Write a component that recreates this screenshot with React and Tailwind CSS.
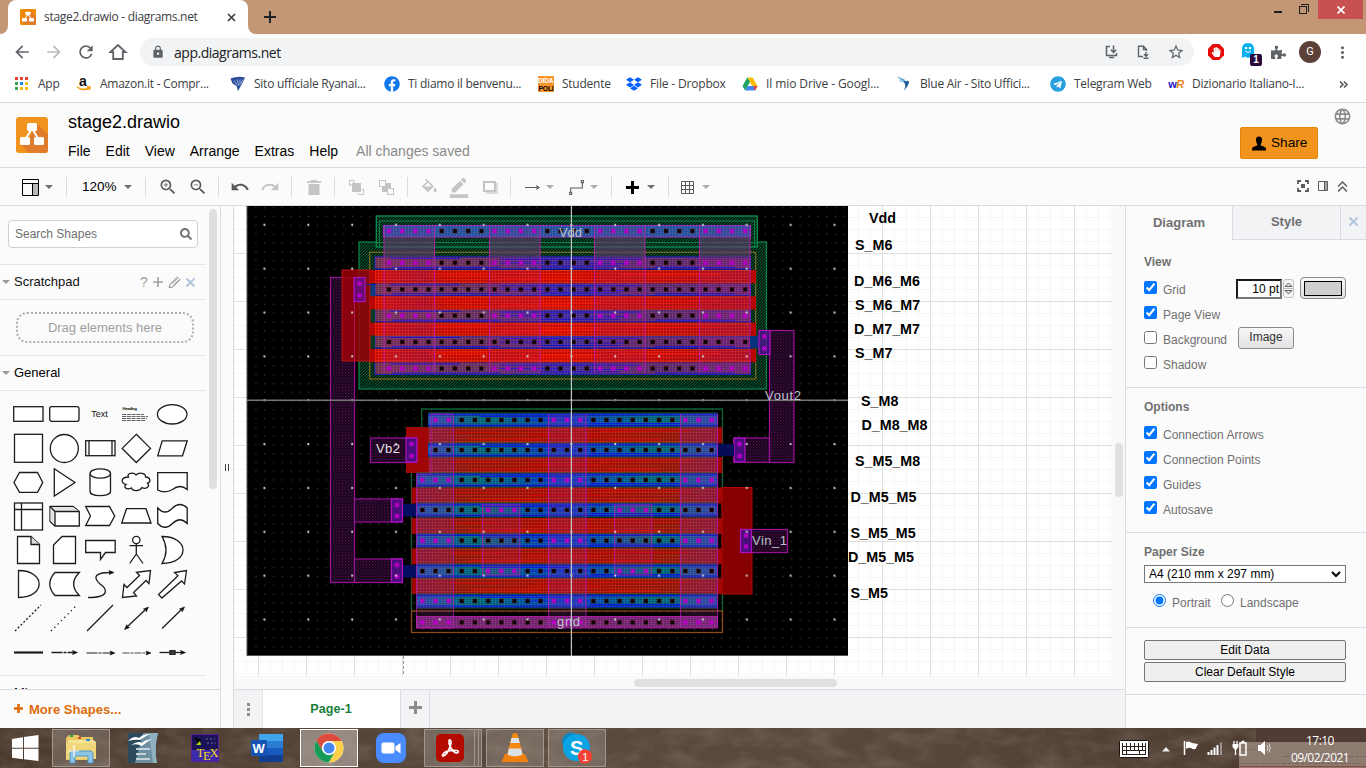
import React from "react";
import { FaFacebook, FaDropbox, FaTelegram, FaHandPaper, FaSearch, FaPuzzlePiece } from "react-icons/fa";
import {
  MdArrowBack, MdArrowForward, MdRefresh, MdLock, MdStarBorder, MdMoreVert,
  MdZoomIn, MdZoomOut, MdUndo, MdRedo, MdLanguage, MdFormatColorFill, MdBorderColor,
} from "react-icons/md";

const UI = "font-['Open_Sans','Noto_Sans',sans-serif]";

function DrawioLogo({ className, bg = "#f2931e" }) {
  return (
    <svg viewBox="0 0 32 36" preserveAspectRatio="none" className={className}>
      <rect width="32" height="36" rx="3" fill={bg} />
      <path d="M20 6 L32 17 V33 Q32 36 29 36 H13 L5 28 L14 20 Z" fill="#df7d2c" />
      <path d="M15 13 L9 23 M17 13 L23 23" stroke="#fff" strokeWidth="2" />
      <rect x="11" y="6" width="10" height="8" rx="1.5" fill="#fff" />
      <rect x="4" y="20" width="10" height="8" rx="1.5" fill="#fff" />
      <rect x="18" y="20" width="10" height="8" rx="1.5" fill="#fff" />
    </svg>
  );
}

function TabStrip() {
  return (
    <div className="flex h-[34px] w-full bg-[#c39676]">
      <div className="flex w-2 items-end bg-white">
        <div className="h-full w-full rounded-br-lg bg-[#c39676]" />
      </div>
      <div className="flex h-full w-[240px] items-center rounded-t-lg bg-white pl-3">
        <DrawioLogo className="h-4 w-4" bg="#f08705" />
        <span className={`${UI} ml-2 w-[172px] whitespace-nowrap text-[12px] tracking-[-0.3px] text-[#3c4043]`}>stage2.drawio - diagrams.net</span>
        <svg className="ml-[11px] size-[9px]" viewBox="0 0 9 9"><path d="M1 1 L8 8 M8 1 L1 8" stroke="#3c4043" strokeWidth="1.7" /></svg>
      </div>
      <div className="flex w-2 bg-white"><div className="h-full w-full rounded-bl-lg bg-[#c39676]" /></div>
      <svg className="ml-2 mt-[11px] size-3" viewBox="0 0 12 12"><path d="M6 0 V12 M0 6 H12" stroke="#202124" strokeWidth="2" /></svg>
      <div className="ml-auto flex">
        <svg className="mr-[9px] h-[19px] w-9" viewBox="0 0 36 19">
          <path d="M1 12 H9" stroke="#1d1d1d" strokeWidth="2" />
          <rect x="26.5" y="6.5" width="7" height="7" fill="none" stroke="#1d1d1d" />
          <path d="M28 4.5 H35.5 V12" fill="none" stroke="#1d1d1d" />
        </svg>
        <div className="mr-[3px] flex h-[19px] w-[45px] items-center justify-center bg-[#c75050]">
          <svg className="size-2" viewBox="0 0 8 8"><path d="M.5 .5 L7.5 7.5 M7.5 .5 L.5 7.5" stroke="#fff" strokeWidth="1.7" /></svg>
        </div>
      </div>
    </div>
  );
}

function AddressRow() {
  return (
    <div className="flex h-[36px] items-center text-[#5f6368]">
      <MdArrowBack className="ml-3 size-5" />
      <MdArrowForward className="ml-3 size-5 text-[#bababd]" />
      <MdRefresh className="ml-3 size-5" />
      <svg className="ml-3 size-5" viewBox="0 0 20 20"><path d="M2.5 10 L10 3 L17.5 10 H14.8 V17 H5.2 V10 Z" fill="none" stroke="#5f6368" strokeWidth="1.8" /></svg>
      <div className="ml-3 flex h-7 w-[1054px] items-center rounded-full bg-[#f1f3f4]">
        <MdLock className="ml-[11px] size-[14px]" />
        <span className={`${UI} ml-[9px] text-[14px] tracking-[-0.48px] text-[#202124]`}>app.diagrams.net</span>
        <svg className="ml-auto size-4" viewBox="0 0 16 16" fill="none" stroke="#5f6368" strokeWidth="1.5">
          <path d="M6 2.5 H2.5 V11.5 H12.5 V9 M5 13.500 H10 M9.5 1.500 V8 M6.8 5.8 L9.5 8.5 L12.2 5.8" />
        </svg>
        <svg className="ml-4 size-4" viewBox="0 0 16 16" fill="none" stroke="#5f6368" strokeWidth="1.4">
          <path d="M7 12.5 H2.500 V2.200 H7.500 L10.500 5.5 V7 M7.500 2.5 V5.5 H10.500 M10 8 V12 M8 10.200 L10 12.200 L12 10.200 M7.5 14.2 H12.5" />
        </svg>
        <MdStarBorder className="ml-[15px] mr-[9px] size-[18px]" />
      </div>
      <svg className="ml-[14px] size-4" viewBox="0 0 16 16"><path d="M4.7 0 H11.3 L16 4.7 V11.3 L11.3 16 H4.7 L0 11.3 V4.7 Z" fill="#e60c0c" /></svg>
      <FaHandPaper className="-ml-[13px] size-[10px] text-white" />
      <div className="relative ml-[19px] size-[20px]">
        <svg className="size-[17px]" viewBox="0 0 17 17">
          <path d="M2 16 V7 Q2 1 8 1 Q14 1 14 7 V16 L11 14.5 L8 16 L5 14.5 Z" fill="#00aef0" />
          <circle cx="6" cy="6" r="1.3" fill="#fff" /><circle cx="10" cy="6" r="1.3" fill="#fff" />
          <path d="M5 9 Q8 12 11 9" stroke="#fff" fill="none" />
        </svg>
        <span className="absolute left-[10px] top-3 flex h-3 w-3 items-center justify-center rounded-[2px] bg-[#2b0a3d] font-['Liberation_Sans',sans-serif] text-[10px] font-bold leading-none text-white">1</span>
      </div>
      <FaPuzzlePiece className="ml-[11px] size-[15px]" />
      <span className="ml-[13px] flex size-[22px] items-center justify-center rounded-full bg-[#5d4037] font-['Roboto',sans-serif] text-[11px] text-white">G</span>
      <MdMoreVert className="ml-[12px] size-[19px]" />
    </div>
  );
}

function AppsIcon() {
  const c = ["#ea4335", "#ea4335", "#ea4335", "#34a853", "#1a86f0", "#fbbc05", "#34a853", "#fbbc05", "#fbbc05"];
  return (
    <svg className="size-4" viewBox="0 0 16 16">
      {c.map((f, i) => <rect key={i} x={1 + (i % 3) * 5} y={1 + Math.floor(i / 3) * 5} width="3" height="3" fill={f} />)}
    </svg>
  );
}

function Bookmark({ w, icon, children }) {
  return (
    <div className={`flex shrink-0 items-center gap-2 whitespace-nowrap ${w}`}>
      <span className="flex size-4 shrink-0 items-center justify-center">{icon}</span>
      <span>{children}</span>
    </div>
  );
}

function Bookmarks() {
  return (
    <div className={`${UI} flex h-[28px] items-center pl-[14px] text-[12px] tracking-[-0.25px] text-[#3c4043]`}>
      <Bookmark w="w-[62px]" icon={<AppsIcon />}>App</Bookmark>
      <Bookmark w="w-[154px]" icon={
        <svg className="size-4 overflow-visible" viewBox="0 0 16 16">
          <text x="3" y="10" fontFamily="Liberation Sans, sans-serif" fontWeight="bold" fontSize="14" fill="#111">a</text>
          <path d="M1 11 Q7 15.5 13 12 M11 11 L14 11 L13.4 14" fill="none" stroke="#f90" strokeWidth="1.5" />
        </svg>}>Amazon.it - Compr...</Bookmark>
      <Bookmark w="w-[154px]" icon={
        <svg className="size-4" viewBox="0 0 16 16"><path d="M.5 2.500 Q8 -.5 15 1.500 L13 6 L8 15 L6.500 10 L2.500 7.500 Z" fill="#2b4b9b" /><path d="M4 4.500 L7 9 M7 3.500 L9 10 M10 3.500 L10 8.500 M13 3.500 L11 8" stroke="#b8c8ea" strokeWidth=".8" /></svg>}>Sito ufficiale Ryanai...</Bookmark>
      <Bookmark w="w-[154px]" icon={<FaFacebook className="size-4 text-[#1278f0]" />}>Ti diamo il benvenu...</Bookmark>
      <Bookmark w="w-[88px]" icon={
        <svg className="size-4 overflow-visible" viewBox="0 0 16 16"><rect width="16" height="16" fill="#f7952b" />
          <text x="0" y="7" textLength="15.5" lengthAdjust="spacingAndGlyphs" fontFamily="Liberation Sans, sans-serif" fontWeight="bold" fontSize="7.5" fill="#fff">DIDA</text>
          <text x="0.5" y="14.5" textLength="15" lengthAdjust="spacingAndGlyphs" fontFamily="Liberation Sans, sans-serif" fontWeight="bold" fontSize="7.5" fill="#000">POLI</text>
        </svg>}>Studente</Bookmark>
      <Bookmark w="w-[116px]" icon={<FaDropbox className="size-4 text-[#0061fe]" />}><span className="tracking-[-0.17px]">File - Dropbox</span></Bookmark>
      <Bookmark w="w-[154px]" icon={
        <svg className="size-4" viewBox="0 0 16 16">
          <path d="M5.3 1.5 H10.7 L15.5 10 H10.2 Z" fill="#fbbc04" />
          <path d="M5.3 1.5 L8 6 L3 14.5 L.5 10 Z" fill="#1ea362" />
          <path d="M5.6 10 H15.5 L13 14.5 H3 Z" fill="#4285f4" />
          <path d="M12.5 10 H15.5 L13 14.5 L11.5 12Z" fill="#ea4335" />
        </svg>}><span className="tracking-[-0.1px]">Il mio Drive - Googl...</span></Bookmark>
      <Bookmark w="w-[154px]" icon={
        <svg className="size-4" viewBox="0 0 16 16"><path d="M5 2 Q9 3.500 9.500 5.500 Q12 4 13 6 Q12.500 10 7.500 15 Q10.500 10 8.500 7 Z" fill="#1d5c9c" /><path d="M2 1 Q5 4 9 4.500 M3.500 4.500 L8 6" stroke="#6db3df" fill="none" strokeWidth="1.300" /></svg>}>Blue Air - Sito Uffici...</Bookmark>
      <Bookmark w="w-[118px]" icon={<FaTelegram className="size-4 text-[#2aa1de]" />}>Telegram Web</Bookmark>
      <Bookmark w="w-[154px]" icon={
        <span className="flex font-['Liberation_Sans',sans-serif] text-[11px] font-bold leading-none tracking-[-0.5px]"><span className="text-[#1a12c8]">w</span><span className="italic text-[#e8861c]">R</span></span>}>Dizionario Italiano-I...</Bookmark>
      <svg className="ml-[17px] h-[7px] w-[9px]" viewBox="0 0 9 7"><path d="M1 .5 L4 3.5 L1 6.5 M5 .5 L8 3.5 L5 6.5" fill="none" stroke="#4d5156" strokeWidth="1.5" /></svg>
    </div>
  );
}

function AppHeader() {
  return (
    <div className="flex h-[65px] border-b border-[#dadce0] bg-[#fbfbfb] pl-4 font-['Liberation_Sans',Arial,sans-serif]">
      <DrawioLogo className="mt-[14px] h-9 w-8" />
      <div className="ml-5 flex flex-col">
        <div className="mt-[7px] text-[18px] leading-6 text-black">stage2.drawio</div>
        <div className="mt-[7px] flex gap-[15px] text-[14px] leading-5 text-black">
          <span>File</span><span>Edit</span><span>View</span><span>Arrange</span><span>Extras</span><span>Help</span>
          <span className="ml-[3px] text-[#8a8a8a]">All changes saved</span>
        </div>
      </div>
      <div className="ml-auto mt-6 flex h-8 w-[78px] items-center rounded-[2px] border border-[#e8850c] bg-[#f2931e] pl-[11px] pt-px text-[13.6px] text-black">
        <svg className="mr-[5px] h-[15px] w-[14px]" viewBox="0 0 14 15"><path d="M7 .5 Q10.3 .5 10 4.5 Q9.7 7 8.8 8 V9.6 Q14 10.8 14 13 V14.5 H0 V13 Q0 10.8 5.2 9.6 V8 Q4.3 7 4 4.5 Q3.7 .5 7 .5Z" /></svg>
        Share
      </div>
      <MdLanguage className="ml-[15px] mr-[14px] mt-[4px] size-[19px] text-[#8c8c8c]" />
    </div>
  );
}

function Caret({ className = "text-[#707070]" }) {
  return <svg className={`h-[4px] w-[8px] shrink-0 ${className}`} viewBox="0 0 9 5" preserveAspectRatio="none"><path d="M0 0 H9 L4.5 5 Z" fill="currentColor" /></svg>;
}

function Seg({ w, children }) {
  return (
    <div className={`flex h-full shrink-0 items-center ${w}`}>
      {children}
      <div className="ml-auto h-5 w-px bg-[#dadce0]" />
    </div>
  );
}

function Toolbar() {
  return (
    <div className="flex h-[38px] items-center border-b border-[#dadce0] bg-[#fbfbfb] pt-px font-['Liberation_Sans',Arial,sans-serif]">
      <Seg w="w-[67px]">
        <svg className="ml-[22px] mr-[6px] size-[17px]" viewBox="0 0 17 17"><rect x="11" y="4" width="5" height="12" fill="#b9b9b9" /><path d="M.5 .5 H16.5 V16.5 H.5 Z M.5 4.5 H16.5 M10.5 4.5 V16" fill="none" stroke="#000" /></svg>
        <Caret />
      </Seg>
      <Seg w="w-[79px]"><span className="ml-[15px] w-[42px] pt-px text-[13.500px]">120%</span><Caret /></Seg>
      <Seg w="w-[73px]"><MdZoomIn className="ml-3 size-5 text-[#5a5a5a]" /><MdZoomOut className="ml-[10px] size-5 text-[#5a5a5a]" /></Seg>
      <Seg w="w-[73px]"><MdUndo className="ml-[11px] size-[20px] text-[#5a5a5a]" /><MdRedo className="ml-[10px] size-[20px] text-[#c4c4c4]" /></Seg>
      <Seg w="w-[43px]"><svg className="ml-[15px] h-[15px] w-[14px]" viewBox="0 0 14 15"><path d="M0 1.2 H4 V0 H10 V1.2 H14 V3 H0 Z M1.5 4 H12.5 V15 H1.5 Z" fill="#c4c4c4" /></svg></Seg>
      <Seg w="w-[73px]">
        <svg className="ml-[14px] size-[15px]" viewBox="0 0 15 15"><path d="M5 .5 H.5 V5.5 M10 14.5 H14.5 V9 M.5 .5 V5 H3 M5 .5 V3 M14.5 9.5 H12.5 M9 14.5 V12.5" fill="none" stroke="#c4c4c4" /><rect x="3" y="3" width="9" height="9" fill="#c4c4c4" /></svg>
        <svg className="ml-[15px] size-[15px]" viewBox="0 0 15 15"><path d="M3 3 H12 V12 H3Z" fill="#c4c4c4" /><rect x=".5" y=".5" width="6" height="6" fill="#fbfbfb" stroke="#c4c4c4" /><rect x="8.500" y="8.500" width="6" height="6" fill="#fbfbfb" stroke="#c4c4c4" /></svg>
      </Seg>
      <Seg w="w-[103px]">
        <MdFormatColorFill className="ml-[12px] mt-[2px] h-[20px] w-[19px] text-[#c4c4c4] [clip-path:inset(0_0_22%_0)]" />
        <MdBorderColor className="ml-[9px] size-[22px] text-[#c4c4c4]" />
        <svg className="ml-[13px] size-[15px]" viewBox="0 0 15 15"><rect x="3" y="3" width="12" height="11" fill="#dcdcdc" /><rect x="1" y="2" width="11" height="9" fill="#fbfbfb" stroke="#c4c4c4" strokeWidth="2" /></svg>
      </Seg>
      <Seg w="w-[101px]">
        <svg className="ml-[14px] h-[7px] w-[15px]" viewBox="0 0 15 7"><path d="M0 3.5 H14" stroke="#5a5a5a" /><path d="M15 3.5 L11 .8 L12 3.5 L11 6.2 Z" fill="#5a5a5a" /></svg>
        <span className="w-[6px]" /><Caret className="text-[#adadad]" />
        <svg className="ml-[14px] size-[17px]" viewBox="0 0 16 16"><path d="M2.5 12 V8.5 H13.5 V3.5" fill="none" stroke="#5a5a5a" /><rect x="1.5" y="12.5" width="2" height="2" fill="#fff" stroke="#5a5a5a" /><rect x="12.5" y="1.5" width="2" height="2" fill="#fff" stroke="#5a5a5a" /></svg>
        <span className="w-[5px]" /><Caret className="text-[#adadad]" />
      </Seg>
      <Seg w="w-[57px]">
        <svg className="ml-[14px] mr-[8px] size-[13px]" viewBox="0 0 13 13"><path d="M6.5 0 V13 M0 6.5 H13" stroke="#000" strokeWidth="3" /></svg><Caret />
      </Seg>
      <svg className="ml-3 mr-2 size-[13px]" viewBox="0 0 13 13"><path d="M.5 .5 H12.5 V12.5 H.5 Z M4.5 .5 V12.5 M8.5 .5 V12.5 M.5 4.5 H12.5 M.5 8.5 H12.5" fill="none" stroke="#5a5a5a" /></svg>
      <Caret className="text-[#adadad]" />
      <div className="ml-auto mr-[18px] flex items-center gap-[9px] pb-[2px]">
        <svg className="size-3" viewBox="0 0 12 12"><path d="M1 4 V1 H4 M8 1 H11 V4 M11 8 V11 H8 M4 11 H1 V8" fill="none" stroke="#5a5a5a" strokeWidth="1.8" /><rect x="4" y="4" width="4" height="4" fill="#5a5a5a" /></svg>
        <svg className="h-[10px] w-[10px]" viewBox="0 0 10 10"><rect x="6" y="1" width="3" height="8" fill="#a5a5a5" /><path d="M.5 .5 H9.5 V9.5 H.5Z M6.5 .5 V9.5" fill="none" stroke="#5a5a5a" /></svg>
        <svg className="h-[11px] w-[11px]" viewBox="0 0 11 11"><path d="M1 5.5 L5.5 1 L10 5.5 M1 10.5 L5.5 6 L10 10.5" fill="none" stroke="#5a5a5a" strokeWidth="1.4" /></svg>
      </div>
    </div>
  );
}

const arrow = (x, y, a) => <path d="M0 0 L-5 -2 L-4 0 L-5 2 Z" fill="#000" strokeWidth=".6" transform={`translate(${x} ${y}) rotate(${a})`} />;

const SHAPES = [
  <rect x="3.7" y="9.7" width="29.3" height="14.6" />,
  <rect x="3.7" y="9.7" width="29.3" height="14.6" rx="2" />,
  <text x="9.3" y="20" fontSize="9" textLength="16.5" stroke="none" fill="#111" fontFamily="Liberation Sans, sans-serif">Text</text>,
  <g><text x="4.5" y="13" fontSize="4.4" textLength="14.5" fontWeight="bold" stroke="none" fill="#111" fontFamily="Liberation Sans, sans-serif">Heading</text><path d="M4 17.5 H26 M4 19.5 H30 M4 21.5 H29 M4 23.5 H28" strokeWidth=".7" strokeDasharray="4 .8" /></g>,
  <ellipse cx="18.2" cy="17.3" rx="14.8" ry="9.7" />,
  <rect x="4.5" y="3.3" width="28" height="28" />,
  <circle cx="18.3" cy="17.5" r="14" />,
  <g><rect x="3.7" y="9.7" width="29.3" height="15" /><path d="M7 9.7 V24.7 M30 9.7 V24.7" /></g>,
  <path d="M18.3 3.3 L32.5 17.4 L18.3 31.5 L4.2 17.4 Z" />,
  <path d="M8.2 9.8 H33.2 L28.5 24.8 H3.7 Z" />,
  <path d="M9.5 7.5 H27.5 L32.7 17.5 L27.5 27.3 H9.5 L4 17.5 Z" />,
  <path d="M8.3 3.8 L29 17.5 L8.3 31 Z" />,
  <g><path d="M8 8.5 V26.5 C8 32 28.5 32 28.5 26.5 V8.5" /><ellipse cx="18.3" cy="8.5" rx="10.2" ry="4.7" /></g>,
  <path d="M10.5 12 C8 8 16 7 18 10 C21 7 28 8 27.5 12 C33 12.5 33 17 29.5 18 C33 22 27 24.5 24 22.5 C22 26.5 14.5 26.5 13.5 23 C8 25.5 5 21.5 8 19.5 C2 18 3 12 10.5 12 Z" />,
  <path d="M3.7 7.7 H33.2 V24.5 Q26 18.5 18.5 24.5 Q11 29 3.7 25 Z" />,
  <g><rect x="4.5" y="4" width="28" height="27" /><path d="M11.5 4 V31 M4.5 10.5 H32.5" /></g>,
  <g><path d="M4 7.5 H27 L33.3 12.5 V27 H9 L4 22.5 Z" /><path d="M4.5 8 H27 L32.5 12 H9Z M4.5 8 L8.5 12.5 V26 L4.5 22Z" fill="#e4e4e4" stroke="none" /><path d="M4 7.5 L9 12.5 H33 M9 12.5 V27" fill="none" /></g>,
  <path d="M3.7 7.5 H27.5 L32.7 17 L27.5 26.5 H3.7 L8.5 17 Z" />,
  <path d="M8.5 9.7 H28 L33 24 H3.7 Z" />,
  <path d="M3.7 9 Q11 17 18.5 9 Q26 2 33.2 9 V24.5 Q26 17 18.5 24.5 Q11 32 3.7 24.5 Z" />,
  <g><path d="M7.5 3.5 H21 L29.5 11.5 V30.5 H7.5 Z" /><path d="M21 3.5 V11.5 H29.5" fill="#ddd" /></g>,
  <path d="M16 3.5 H29.5 V30.5 H7.5 V12 Z" />,
  <path d="M3.7 7.5 H33.2 V19.5 H23.5 L18.5 26.5 V19.5 H3.7 Z" />,
  <g><circle cx="18.3" cy="7" r="3.7" /><path d="M18.3 11 V21 M11.5 12.7 H25 M18.3 21 L11.7 30.5 M18.3 21 L25 30.5" /></g>,
  <path d="M8 3.5 C36 3.5 36 30.5 8 30.5 Q16 17 8 3.5 Z" />,
  <path d="M8.5 3.5 C36 3.5 36 30.5 8.5 30.5 Z" />,
  <path d="M9 5.5 H33.3 Q22 17 33.3 28.5 H9 Q-1.5 17 9 5.5 Z" />,
  <g><path d="M6 30.5 C30 30.5 24 21 18 17 C8 8 18 5.5 28 5.5" fill="none" />{arrow(32, 5.5, 0)}</g>,
  <path d="M32.5 3.5 L31 16.5 L28 13.5 L15.5 25.5 L18.5 29 L4.5 30.5 L6 17.5 L9 20.5 L21.5 8.5 L18.5 5.3 Z" />,
  <path d="M32.5 3.5 L30.5 17 L27.5 14 L8 31 L4.5 27.5 L24 8.8 L20.5 5.5 Z" />,
  <path d="M5 30 L31 4" strokeDasharray="2 2" />,
  <path d="M5 30 L31 4" strokeDasharray="1.3 3.4" />,
  <path d="M5 30 L31 4" />,
  <g><path d="M9 26 L27 9" />{arrow(30.5, 6, -43)}{arrow(6.5, 28.5, 137)}</g>,
  <g><path d="M8 27.5 L27 9" />{arrow(30.5, 6, -43)}</g>,
  <path d="M4 17.5 H33" strokeWidth="2.2" />,
  <g><path d="M5.500 17.5 H29" strokeDasharray="11 1 3 1" />{arrow(31.5, 17.5, 0)}</g>,
  <g><path d="M4.5 18 H30" strokeDasharray="11 1 3 1" strokeWidth="1" />{arrow(33, 18, 0)}</g>,
  <g><path d="M4.5 18 H30" strokeDasharray="7 1 3 1" strokeWidth=".8" />{arrow(33, 18, 0)}</g>,
  <g><path d="M5.5 17.5 H29" /><rect x="16" y="15.7" width="5" height="3.6" fill="#444" />{arrow(31.5, 17.5, 0)}</g>,
];

function Sidebar() {
  return (
    <div className="flex h-full w-[221px] flex-col border-r border-[#dadce0] bg-[#fbfbfb] font-['Liberation_Sans',Arial,sans-serif]">
      <div className="flex h-[483px] overflow-hidden">
        <div className="w-[206px] shrink-0">
          <div className="flex h-[59px] border-b border-[#e5e5e5] pl-2 pt-[14px]">
            <div className="flex h-[28px] w-[190px] items-center rounded border border-[#d0d0d0] bg-white pl-[6px] text-[12px] text-[#707070]">
              Search Shapes<FaSearch className="ml-auto mr-[5px] size-3 text-[#707070]" />
            </div>
          </div>
          <div className="flex h-[35px] items-center border-b border-[#e5e5e5] pl-[2px] text-[13px] text-[#111]">
            <Caret className="mr-[4px] text-[#999]" />
            <span className="w-[126px]">Scratchpad</span>
            <span className="text-[14px] text-[#a3a3a3]">?</span>
            <svg className="ml-[5px] size-[10px]" viewBox="0 0 10 10"><path d="M5 0 V10 M0 5 H10" stroke="#a3a3a3" strokeWidth="1.6" /></svg>
            <svg className="ml-[5px] size-[13px]" viewBox="0 0 12 12"><path d="M1 11 L2 7.5 L8.5 1 L11 3.5 L4.5 10 Z M3.5 7 L8.5 2.5 M5 8.500 L10 4" fill="none" stroke="#8c8c8c" strokeWidth=".9" /></svg>
            <svg className="ml-[5px] size-[9px]" viewBox="0 0 9 9"><path d="M.5 .5 L8.5 8.5 M8.5 .5 L.5 8.5" stroke="#b3c6de" strokeWidth="2" /></svg>
          </div>
          <div className="flex h-[56px] border-b border-[#e5e5e5] pl-4 pt-3">
            <div className="flex h-[31px] w-[178px] items-center justify-center rounded-[11px] border-2 border-dotted border-[#b0b0b0] text-[13px] text-[#a0a0a0]">Drag elements here</div>
          </div>
          <div className="flex h-[35px] items-center border-b border-[#e5e5e5] pl-[2px] text-[13px] text-black">
            <Caret className="mr-[4px] text-[#999]" />General
          </div>
          <div className="grid h-[285px] grid-cols-[repeat(5,36px)] auto-rows-[34px] border-b border-[#e5e5e5] pl-[10px] pt-[6px]">
            {SHAPES.map((s, i) => (
              <svg key={i} className="h-[34px] w-[36px]" viewBox="0 0 36 34" fill="#fff" stroke="#1c1c1c" strokeWidth="1.3">{s}</svg>
            ))}
          </div>
          <div className="pl-[14px] pt-[9px] text-[13px] leading-[16px] text-black">Misc</div>
        </div>
        <div className="ml-[3px] mt-[3px] h-[280px] w-2 rounded-full bg-[#dfdfdf]" />
      </div>
      <div className="flex flex-1 items-center border-t border-[#dadce0] pl-[14px] pt-[2px] text-[13px] font-bold text-[#dd6b0c]">
        <svg className="mb-[3px] mr-[6px] size-[9px]" viewBox="0 0 9 9"><path d="M4.5 0 V9 M0 4.5 H9" stroke="#dd6b0c" strokeWidth="2.6" /></svg>
        <span className="tracking-[0.04px]">More Shapes...</span>
      </div>
    </div>
  );
}

/* Layout cell drawing */
const range = (n) => Array.from({ length: n }, (_, i) => i);

function Contact({ x, y, pink, r = 2 }) {
  return pink
    ? <path d={`M${x - 2.2} ${y - 2.2} L${x + 2.2} ${y + 2.2} M${x + 2.2} ${y - 2.2} L${x - 2.2} ${y + 2.2} M${x} ${y - 2.5} V${y + 2.5} M${x - 2.5} ${y} H${x + 2.5}`} stroke="#b400c4" strokeWidth="1.1" />
    : <rect x={x - r} y={y - r} width={r * 2} height={r * 2} fill="#0a0408" stroke="#501818" strokeWidth=".5" />;
}

function BoxP({ x, y, w, h }) {
  return <rect x={x} y={y} width={w} height={h} fill="url(#purple)" stroke="#9a129a" strokeWidth="1.2" />;
}

function Via({ x, y, h = 24 }) {
  return (
    <g>
      <rect x={x} y={y} width="11" height={h} fill="#5a10a0" fillOpacity=".7" stroke="#b010c0" strokeWidth="1.2" />
      <Contact x={x + 5.5} y={y + 6} pink /><Contact x={x + 5.5} y={y + h - 6} pink />
    </g>
  );
}

function ChipLayout() {
  const upRows = [262.8, 289.3, 315.7, 342, 368.5];
  const upRed = [270, 296.3, 322.7, 349];
  const lowRows = [420, 450, 480, 510, 540.7, 571, 601];
  const lowRed = [427.3, 457, 487.5, 518, 548.3, 578];
  const lowCols = [[548.5, 37.5], [680.5, 37]];
  return (
    <g>
      <rect x="247" y="206" width="601" height="450" fill="#000" />
      <rect x="247" y="206" width="601" height="450" fill="url(#dots)" />
      <path d="M247 206 V656 M247 655.5 H848" stroke="#555" fill="none" />

      <rect x="359" y="242" width="407.5" height="147" fill="url(#well)" stroke="#0c8048" strokeWidth="1.3" />
      <rect x="376.3" y="216" width="381" height="31" fill="url(#well)" stroke="#10904e" strokeWidth="1.3" />
      <path d="M379.5 247 V221 H754.5 V247 M376 242.5 H757" fill="none" stroke="#0d8048" />
      <rect x="369.7" y="252.3" width="386" height="126.7" fill="none" stroke="#7d6a1c" strokeWidth="1.2" />
      <rect x="375" y="257" width="375.5" height="117" fill="#0a0a70" />

      <BoxP x={330.5} y={277.5} w={24} h={305} />
      <rect x="342" y="270" width="28" height="91" fill="#a00008" fillOpacity=".82" stroke="#c01010" />
      <path d="M354.5 277 V361" stroke="#b01050" />

      <rect x="383.5" y="225.5" width="367" height="11.5" fill="#2c58a8" stroke="#9030c0" strokeWidth="1.1" />
      <rect x="383.5" y="225.5" width="367" height="11.5" fill="url(#speck)" />
      {upRows.map((y) => (
        <g key={y}>
          <rect x="375" y={y - 6} width="375.5" height="12" fill="url(#upbar)" stroke="#1c1cb8" />
          <path d={`M390 ${y - 4.500} H460 M500 ${y - 3.500} H640 M655 ${y + 4.500} H735 M392 ${y + 4.500} H500 M540 ${y + 3.500} H620 M500 ${y} H560 M590 ${y + 1} H625`} stroke="#1c14d8" />
          <rect x="375" y={y - 6} width="375.5" height="12" fill="url(#speck)" />
        </g>
      ))}
      {upRed.map((y) => (
        <g key={y}>
          <rect x="370" y={y} width="386" height="13.2" fill="#b80606" />
          <rect x="375" y={y} width="375" height="13.2" fill="url(#upred)" />
          <rect x="375" y={y} width="375" height="13.2" fill="url(#redspeck)" />
          <path d={`M375 ${y + .5} H750 M375 ${y + 12.7} H750`} stroke="#c8400c" strokeDasharray="1.5 1" />
          <path d={`M430 ${y + 4} H490 M540 ${y + 6.5} H600 M500 ${y + 9} H570 M620 ${y + 4.5} H720`} stroke="#f01404" />
        </g>
      ))}
      {[384, 489.5, 594.5, 699.5].map((x) => (
        <g key={x}>
          <rect x={x} y="237" width="50.5" height="20" fill="#4c4464" fillOpacity=".6" />
          <rect x={x} y="226" width="50.5" height="147" fill="#a0208c" fillOpacity=".14" />
          <path d={`M${x} 226 V373 M${x + 50.5} 226 V373`} stroke="#c020b8" strokeOpacity=".75" strokeWidth="1.1" />
        </g>
      ))}
      {[231, ...upRows].map((y, r) => range(28).map((i) => (
        <Contact key={`${y}-${i}`} x={389 + i * 13.19} y={y} pink={(i >> 2) % 2 === 0 && (r === 0 || r % 2 === 1)} />
      )))}
      <rect x="370.5" y="284" width="4.5" height="12" fill="#0c3c80" />
      <path d="M365 284.500 H376" stroke="#1020b0" />
      <rect x="371" y="309.500" width="4" height="12" fill="#063c24" /><rect x="371" y="335.5" width="4" height="12" fill="#063c24" />
      <Via x={354} y={277.5} />
      <rect x="750" y="336" width="9" height="12" fill="#08307c" />

      <BoxP x={769.5} y={330.5} w={24.5} h={132} />
      <BoxP x={734} y={438} w={35.5} h={24.3} />
      <Via x={759} y={330.5} />
      <Via x={734} y={438} />
      <BoxP x={354.5} y={499} w={48} h={23} />
      <BoxP x={354.5} y={559} w={48} h={23.5} />
      <Via x={391.5} y={499} h={23} />
      <Via x={391.5} y={559} h={23.5} />

      <path d="M411.5 611 V470.5 H421.7 V409 H722.5 V611" fill="none" stroke="#0c6236" strokeWidth="1.3" />
      <rect x="411.5" y="611" width="311" height="21.5" fill="none" stroke="#8a4c14" strokeWidth="1.3" />
      <rect x="403" y="504" width="15" height="12.5" fill="#040c60" /><rect x="403" y="565" width="15" height="12.5" fill="#040c60" />
      <rect x="717" y="444" width="17" height="12" fill="#040c58" />
      <rect x="406" y="427" width="22" height="45.5" fill="#a00404" />
      <rect x="722" y="487.5" width="30" height="106.5" fill="#860000" stroke="#b80808" />
      {lowRed.map((y, i) => (
        <g key={y}>
          <rect x={i < 2 ? 406 : 411.5} y={y} width={i < 2 ? 316.5 : 311} height="16" fill="#a00606" />
          <rect x={i < 2 ? 428 : 416.5} y={y} width={i < 2 ? 290 : 301} height="16" fill="url(#lowred)" />
          <rect x={i < 2 ? 428 : 416.5} y={y} width={i < 2 ? 290 : 301} height="16" fill="url(#redspeck)" />
          <path d={`M450 ${y + 5} H500 M530 ${y + 8} H600 M600 ${y + 4} H690 M470 ${y + 12} H540 M610 ${y + 12.5} H660`} stroke="#d00c04" />
        </g>
      ))}
      {lowRows.map((y, i) => (
        <g key={y}>
          <rect x={i < 2 ? 428 : 416.5} y={y - 6.5} width={i < 2 ? 290 : 301} height="13" fill="url(#lowbar)" />
          <path d={`M${i < 2 ? 428 : 416.5} ${y - 5.5} H717.5 M${i < 2 ? 428 : 416.5} ${y + 5.5} H717.5`} stroke="#0a20d0" strokeWidth="1.8" />
          <path d={`M${i < 2 ? 428 : 416.5} ${y - 7.2} H717.5 M${i < 2 ? 428 : 416.5} ${y + 7.2} H717.5`} stroke="#1c6a34" strokeWidth=".7" />
          <rect x={i < 2 ? 428 : 416.5} y={y - 6} width={i < 2 ? 290 : 301} height="12" fill="url(#speck)" />
          <path d={`M480 ${y - 3.500} H570 M530 ${y} H590 M590 ${y + 3.500} H680`} stroke="#0c18e0" strokeWidth=".9" />
        </g>
      ))}
      <rect x="416.5" y="616.5" width="301" height="11.5" fill="#7c2878" stroke="#b018a8" />
      <rect x="416.5" y="616.5" width="301" height="11.5" fill="url(#speck)" />
      {lowCols.map(([x, w]) => (
        <g key={x}>
          <rect x={x} y="414" width={w} height="214" fill="#90309c" fillOpacity=".2" />
          <path d={`M${x} 414 V628 M${x + w} 414 V628`} stroke="#b81cb8" strokeOpacity=".75" strokeWidth="1.1" />
        </g>
      ))}
      <path d="M431 414 H453.5 V628 H416.5 V474 H431 Z" fill="#90309c" fillOpacity=".2" stroke="#b81cb8" strokeOpacity=".7" />
      {[482.5, 614.5].map((x) => (
        <rect key={x} x={x} y="505" width="37.3" height="70" fill="#c02080" fillOpacity=".16" stroke="#b81cb8" strokeOpacity=".7" />
      ))}
      {[...lowRows, 622.3].map((y, r) => range(23).map((i) => {
        const k = i - 1;
        if (k < 0 && r < 2) return null;
        const main = k < 2 || (k >= 9 && k <= 11) || k >= 19;
        const mid = (k >= 4 && k <= 6) || (k >= 14 && k <= 16);
        const pink = r === 3 || r === 5 ? mid : r !== 1 && main;
        return <Contact key={`${y}-${i}`} x={435.5 + k * 13.15} y={y} pink={pink} />;
      }))}
      <BoxP x={370.5} y={438} w={46} h={24.5} />
      <Via x={406} y={438} />
      <BoxP x={740.5} y={529.5} w={47} h={23} />
      <Via x={740.5} y={529.5} h={23} />

      <rect x="247" y="206" width="601" height="450" fill="url(#majordots)" />
      <path d="M247 400.3 H848" stroke="#777" strokeWidth="1.6" />
      <path d="M571.4 206 V656" stroke="#c4c4c8" strokeWidth="1.2" />
      <g fill="#bcc2cc" fontFamily="Liberation Sans, sans-serif" fontSize="13">
        <text x="559" y="236.5" textLength="23">Vdd</text>
        <text x="765" y="399.5" textLength="36">Vout2</text>
        <text x="376" y="453" textLength="24" fill="#e4e4e4">Vb2</text>
        <text x="752" y="544.5" textLength="35">Vin_1</text>
        <text x="557" y="626" textLength="23">gnd</text>
      </g>
    </g>
  );
}

const LABELS = [
  ["Vdd", 869, 223], ["S_M6", 855, 250], ["D_M6_M6", 854, 286], ["S_M6_M7", 855, 310], ["D_M7_M7", 854, 334],
  ["S_M7", 855, 358], ["S_M8", 861, 406], ["D_M8_M8", 861.5, 430], ["S_M5_M8", 855, 466], ["D_M5_M5", 850.5, 502],
  ["S_M5_M5", 850.5, 538], ["D_M5_M5", 848, 562], ["S_M5", 850.5, 598],
];

function Canvas() {
  return (
    <svg className="block h-[470px] w-[878px] bg-white" viewBox="234 206 878 470">
      <defs>
        <pattern id="grid" x="258" y="253" width="48" height="48" patternUnits="userSpaceOnUse">
          <path d="M12.5 0 V48 M24.5 0 V48 M36.5 0 V48 M0 12.5 H48 M0 24.5 H48 M0 36.5 H48" stroke="#f6f6f6" />
          <path d="M.5 0 V48 M0 .5 H48" stroke="#e0e0e0" />
        </pattern>
        <pattern id="dots" x="571.4" y="400.3" width="8.78" height="8.78" patternUnits="userSpaceOnUse">
          <rect x="0" y="0" width="1.3" height="1.3" fill="#383838" />
        </pattern>
        <pattern id="majordots" x="570.2" y="399.1" width="43.85" height="43.85" patternUnits="userSpaceOnUse">
          <circle cx="1.2" cy="1.2" r="1.1" fill="#d8d8d8" />
        </pattern>
        <pattern id="well" width="3" height="3" patternUnits="userSpaceOnUse">
          <rect width="3" height="3" fill="#041f12" /><path d="M0 3 L3 0" stroke="#0a5a34" strokeWidth="1" />
        </pattern>
        <pattern id="purple" width="3" height="3" patternUnits="userSpaceOnUse">
          <rect width="3" height="3" fill="#170419" /><rect x="0" y="0" width="1.2" height="1.2" fill="#4c1252" /><rect x="1.5" y="1.5" width="1.2" height="1.2" fill="#3c0c42" />
        </pattern>
        <pattern id="speck" width="3" height="2" patternUnits="userSpaceOnUse">
          <rect width="1" height="1" fill="#d0a0b0" fillOpacity=".18" /><rect x="1.5" y="1" width="1.2" height="1" fill="#000" fillOpacity=".25" />
        </pattern>
        <pattern id="redspeck" width="3" height="3" patternUnits="userSpaceOnUse">
          <rect width="1" height="1" fill="#d07050" fillOpacity=".3" /><rect x="1" y="1" width="2" height="2" fill="#400" fillOpacity=".32" />
        </pattern>
        <linearGradient id="upbar"><stop offset="0" stopColor="#7a3858" /><stop offset=".3" stopColor="#6c3468" /><stop offset=".5" stopColor="#4630a0" /><stop offset=".7" stopColor="#603072" /><stop offset="1" stopColor="#702c78" /></linearGradient>
        <linearGradient id="upred"><stop offset="0" stopColor="#f01408" /><stop offset=".13" stopColor="#cc141c" /><stop offset=".2" stopColor="#e41406" /><stop offset=".5" stopColor="#ec1404" /><stop offset="1" stopColor="#cc141c" /></linearGradient>
        <linearGradient id="lowred"><stop offset="0" stopColor="#a01c2c" /><stop offset=".15" stopColor="#a42010" /><stop offset=".5" stopColor="#c41408" /><stop offset=".85" stopColor="#a42010" /><stop offset="1" stopColor="#a01c2c" /></linearGradient>
        <linearGradient id="lowbar"><stop offset="0" stopColor="#1c58b8" /><stop offset=".2" stopColor="#00707c" /><stop offset=".5" stopColor="#0848c8" /><stop offset=".8" stopColor="#00707c" /><stop offset="1" stopColor="#1c50b8" /></linearGradient>
      </defs>
      <rect x="234" y="206" width="878" height="470" fill="url(#grid)" />
      <path d="M403.5 656 V676" stroke="#a0a0a0" strokeDasharray="3 2" />
      <ChipLayout />
      <g fontFamily="Liberation Sans, Arial, sans-serif" fontWeight="bold" fontSize="14.3" fill="#000">
        {LABELS.map(([t, x, y]) => <text key={y} x={x} y={y}>{t}</text>)}
      </g>
    </svg>
  );
}

function Editor() {
  return (
    <div className="flex h-full w-[891px] flex-col font-['Liberation_Sans',Arial,sans-serif]">
      <div className="flex h-[470px]">
        <Canvas />
        <div className="w-[13px] bg-[#f8f9fa] pl-[3px] pt-[237px]"><div className="h-[54px] w-2 rounded-full bg-[#dfe0e1]" /></div>
      </div>
      <div className="h-[13px] bg-[#f8f9fa] pl-[400px] pt-[3px]"><div className="h-2 w-[203px] rounded-full bg-[#dfe0e1]" /></div>
      <div className="flex h-[39px] border-t border-[#dadce0] bg-[#f1f3f4]">
        <div className="flex w-[29px] flex-col items-center justify-center gap-[2px] border-r border-[#e4e5e7]">
          <span className="size-[3px] bg-[#8c8c8c]" /><span className="size-[3px] bg-[#8c8c8c]" /><span className="size-[3px] bg-[#8c8c8c]" />
        </div>
        <div className="flex w-[138px] items-center justify-center border-r border-[#dadce0] bg-white pr-px text-[12.6px] font-bold text-[#188038]">Page-1</div>
        <div className="flex w-[29px] items-center justify-center border-r border-[#dadce0]">
          <svg className="mb-[3px] size-[13px]" viewBox="0 0 13 13"><path d="M6.5 0 V13 M0 6.5 H13" stroke="#8c8c8c" strokeWidth="3" /></svg>
        </div>
      </div>
    </div>
  );
}

function Check({ label, on }) {
  return (
    <label className="flex h-[25px] items-center">
      <input type="checkbox" defaultChecked={on} className="mb-[5px] size-[13px]" />
      <span className="ml-[6px]">{label}</span>
    </label>
  );
}

function FormatPanel() {
  return (
    <div className="flex h-full w-[241px] flex-col border-l border-[#dadce0] bg-[#fbfbfb] font-['Liberation_Sans',Arial,sans-serif] text-[12px] text-[#707070]">
      <div className="flex h-[34px] text-[13px] font-bold">
        <div className="flex w-[106px] items-center justify-center">Diagram</div>
        <div className="flex w-[108px] items-center justify-center border-b border-l border-[#dadce0] bg-[#f1f3f4] pb-[1px]">Style</div>
        <div className="flex w-[26px] items-center justify-center border-b border-l border-[#dadce0] bg-[#f1f3f4] pr-px">
          <svg className="mb-[2px] size-[9px]" viewBox="0 0 9 9"><path d="M.5 .5 L8.5 8.5 M8.5 .5 L.5 8.5" stroke="#b3c6de" strokeWidth="2" /></svg>
        </div>
      </div>
      <div className="flex h-[148px] flex-col border-b border-[#dadce0] pl-[18px] pt-[15px]">
        <div className="h-[22px] leading-[14px] font-bold">View</div>
        <div className="flex h-[25px] w-[202px] items-center">
          <Check label="Grid" on />
          <div className="mb-px ml-auto flex h-5 w-[46px] items-center justify-end border-2 border-t-[#1a1a1a] border-l-[#1a1a1a] border-b-[#767676] border-r-[#767676] bg-white pr-px text-black">10 pt</div>
          <div className="mb-[2px] ml-px flex h-[19px] w-[11px] flex-col rounded-[3px] border border-[#c0c0c0] bg-[#f4f4f4]">
            <svg className="h-[17px] w-[9px]" viewBox="0 0 9 17"><path d="M0 8.5 H9" stroke="#bbb" /><path d="M1 6.500 L4.500 3 L8 6.500Z M1 10.500 L4.500 14 L8 10.500Z" fill="#ddd" stroke="#555" strokeWidth=".9" /></svg>
          </div>
          <div className="mb-[3px] ml-[6px] flex h-[22px] w-[46px] items-center justify-center rounded-[4px] border border-[#8a8a8a] bg-linear-to-b from-[#f8f8f8] to-[#e2e2e2]">
            <div className="h-[15px] w-[38px] border border-black bg-[#cfcfcf]" />
          </div>
        </div>
        <Check label="Page View" on />
        <div className="flex h-[25px] items-center">
          <Check label="Background" />
          <div className="mb-[3px] ml-[11px] flex h-[22px] w-[56px] items-center justify-center rounded-[3px] border border-[#8a8a8a] bg-linear-to-b from-[#f8f8f8] to-[#e2e2e2] pb-[2px] text-[#333]">Image</div>
        </div>
        <Check label="Shadow" />
      </div>
      <div className="flex h-[145px] flex-col border-b border-[#dadce0] pl-[18px] pt-[12px]">
        <div className="h-[22px] leading-[14px] font-bold">Options</div>
        <Check label="Connection Arrows" on />
        <Check label="Connection Points" on />
        <Check label="Guides" on />
        <Check label="Autosave" on />
      </div>
      <div className="flex h-[95px] flex-col border-b border-[#dadce0] pl-[18px] pt-[12px]">
        <div className="h-[20px] leading-[14px] font-bold">Paper Size</div>
        <div className="flex h-[18px] w-[202px] items-center border border-[#767676] bg-white pl-1 text-black">
          A4 (210 mm x 297 mm)
          <svg className="ml-auto mr-[4px] h-[7px] w-[10px]" viewBox="0 0 10 7"><path d="M1 1 L5 5 L9 1" fill="none" stroke="#000" strokeWidth="2" /></svg>
        </div>
        <div className="mt-[7px] flex h-[25px] items-center pl-[9px]">
          <input type="radio" name="o" defaultChecked className="mb-[5px] size-[13px]" /><span className="ml-[6px] w-[49px]">Portrait</span>
          <input type="radio" name="o" className="mb-[5px] size-[13px]" /><span className="ml-[6px]">Landscape</span>
        </div>
      </div>
      <div className="flex h-[67px] flex-col gap-[2px] border-b border-[#dadce0] pl-[18px] pt-[12px] text-black">
        <div className="flex h-5 w-[202px] items-center justify-center rounded-[2px] border border-[#767676] bg-[#efefef]">Edit Data</div>
        <div className="flex h-5 w-[202px] items-center justify-center rounded-[2px] border border-[#767676] bg-[#efefef]">Clear Default Style</div>
      </div>
    </div>
  );
}

function TaskBtn({ w, className = "", children }) {
  return <div className={`flex h-[38px] shrink-0 items-center justify-center ${w} ${className}`}>{children}</div>;
}

function Taskbar() {
  const on = "border border-[#a09890] bg-[#a8a098]/35";
  return (
    <div className="relative h-10 w-full overflow-hidden bg-[#57483b]">
      <svg className="absolute inset-0 h-10 w-[1366px]" viewBox="0 0 1366 40">
        <defs>
          <filter id="grain" x="0" y="0" width="100%" height="100%"><feTurbulence type="fractalNoise" baseFrequency="0.03 0.06" numOctaves="4" seed="8" /><feColorMatrix values="0 0 0 0 0.5 0 0 0 0 0.42 0 0 0 0 0.35 0 0 0 .9 -0.35" /></filter>
          <linearGradient id="tb"><stop offset="0" stopColor="#4c3a2e" /><stop offset=".4" stopColor="#5a4a3e" /><stop offset=".6" stopColor="#57493c" /><stop offset="1" stopColor="#4d3a30" /></linearGradient>
        </defs>
        <rect width="1366" height="40" fill="url(#tb)" />
        <rect width="1366" height="40" filter="url(#grain)" opacity=".5" />
        <rect x="1239" y="14" width="127" height="26" fill="#8d7b70" />
        <rect x="1256" y="0" width="110" height="14" fill="#503c34" />
        <path d="M1239 38.5 H1366" stroke="#8c4a40" />
        <path d="M1242 21.500 H1256 M1282 28.500 H1366 M1240 35.500 H1360" stroke="#655850" strokeOpacity=".6" strokeDasharray="2 1 4 2 3 1" />
      </svg>
      <div className="relative flex h-full items-center">
        <svg className="ml-3 size-[27px]" viewBox="0 0 27 27"><path d="M0 4 L11 2.3 V12.8 H0 Z M12 2.1 L26.5 0 V12.8 H12 Z M0 13.8 H11 V24.3 L0 22.7 Z M12 13.8 H26.5 V26 L12 24.3 Z" fill="#fff" /></svg>
        <TaskBtn w="ml-[13px] w-[58px]" className={on}>
          <svg className="h-8 w-8" viewBox="0 0 32 32">
            <path d="M1 6 L4 3 H13 L15 5 H28 V26 L24 28 H1 Z" fill="#e8c860" /><path d="M3 8 H28 L31 10 V27 H3 Z" fill="#f6e293" /><path d="M1 11 H31 V27 H1 Z" fill="#f0d678" />
            <rect x="5" y="3" width="3" height="2" fill="#1da83c" /><rect x="13" y="5" width="3" height="2" fill="#d84a2c" /><rect x="21" y="7" width="4" height="2" fill="#2c88d8" />
            <path d="M5 31 V22 Q5 19 8 19 H25 Q28 19 28 22 V31 H23 V24 H10 V31 Z" fill="#8cc4e4" stroke="#4a98c8" />
            <path d="M9 13 V25 M4 19 H14" stroke="#fff" strokeWidth="1.2" />
          </svg>
        </TaskBtn>
        <TaskBtn w="ml-[16px] w-[33px]">
          <svg className="h-8 w-8" viewBox="0 0 32 32"><path d="M1 1 H31 Q27 16 30 31 H1 Z" fill="#6d8fa0" /><path d="M1 1 H16 L8 31 H1Z" fill="#2c4a5c" /><path d="M22 1 H31 Q27 16 30 31 H26 Z" fill="#8fb0bf" /><path d="M1 9 Q7 3 12 6 Q16 2 23 2 Q17 5 13 8 Q8 7 1 9 M4 13 Q12 8 15 11 Q17 8 25 7 Q18 11 15 14 Q10 11 4 13" fill="#fff" /><path d="M9 17 H23 M9 22 H19 M9 27 H23" stroke="#c4d3da" strokeWidth="2" /></svg>
        </TaskBtn>
        <TaskBtn w="ml-[32px] w-[28px]">
          <svg className="size-7" viewBox="0 0 28 28"><rect x=".5" y=".5" width="27" height="27" fill="#1c1258" stroke="#5a1e98" /><rect x="1" y="16" width="26" height="11" fill="#3c2aa8" /><path d="M3 3 L10 6 L8 11 Z" fill="#000" /><path d="M5 11 L9 7 L10 11 Z" fill="#a8e010" /><path d="M15 5 H24 M16 9 H25" stroke="#6a7088" strokeDasharray="2 2" />
            <g fontFamily="Liberation Serif, serif" fontSize="12.500" fill="#f0dc10"><text x="5.5" y="23">T</text><text x="12" y="26">E</text><text x="18.500" y="23">X</text></g></svg>
        </TaskBtn>
        <TaskBtn w="ml-[31px] w-[33px]">
          <svg className="h-7 w-8" viewBox="0 0 32 28"><rect x="8" width="24" height="7" fill="#41a5ee" /><rect x="8" y="7" width="24" height="7" fill="#2b7cd3" /><rect x="8" y="14" width="24" height="7" fill="#185abd" /><rect x="8" y="21" width="24" height="7" fill="#103f91" /><rect y="6" width="16" height="16" rx="1" fill="#1654b4" /><text x="1.5" y="18.5" textLength="13" fontFamily="Liberation Sans, sans-serif" fontWeight="bold" fontSize="13" fill="#fff">W</text></svg>
        </TaskBtn>
        <TaskBtn w="ml-[17px] w-[58px]" className="border border-white bg-[#c4beb8]/55">
          <svg className="size-[30px]" viewBox="0 0 30 30"><circle cx="15" cy="15" r="14.5" fill="#fff" /><path d="M2.3 7.8 A14.5 14.5 0 0 1 27.7 8 H15 A7 7 0 0 0 8.6 18.2 Z" fill="#dd4b3e" /><path d="M27.7 8 A14.5 14.5 0 0 1 14.8 29.5 L21 18.5 A7 7 0 0 0 15 8 Z" fill="#fdd04c" /><path d="M2.3 7.8 A14.5 14.5 0 0 0 14.8 29.5 L21 18.5 A7 7 0 0 1 9 18.5 Z" fill="#179c58" /><circle cx="15" cy="15" r="6.8" fill="#fff" /><circle cx="15" cy="15" r="5.5" fill="#4688f1" /></svg>
        </TaskBtn>
        <TaskBtn w="ml-[17px] w-[31px]">
          <svg className="size-[30px]" viewBox="0 0 30 30"><rect width="30" height="30" rx="8" fill="#4a8cff" /><rect x="5.5" y="9.5" width="13" height="11" rx="2" fill="#fff" /><path d="M19.5 13.5 L24.5 10 V20.5 L19.5 17Z" fill="#fff" /></svg>
        </TaskBtn>
        <TaskBtn w="ml-[18px] w-[51px]" className={on}>
          <svg className="size-7" viewBox="0 0 28 28"><rect width="28" height="28" rx="5" fill="#b30b00" /><path d="M6.5 21 C8 17.5 14 16 21 16.5 C23.5 17 22 20 19 18.5 C15 16 12.5 10 13 6.5 C13.5 5 15.5 6 15 9 C14 14.5 11 20 8.5 21.5 C7.5 22 6 22 6.5 21 Z" fill="none" stroke="#fff" strokeWidth="1.7" /></svg>
        </TaskBtn>
        <div className={`h-[38px] w-1 ${on} border-l-0`} /><div className={`h-[38px] w-[3px] ${on} border-l-0`} />
        <TaskBtn w="ml-[4px] w-[58px]" className={on}>
          <svg className="h-[30px] w-7" viewBox="0 0 28 30"><path d="M4 21 H24 L27.5 29 H.5 Z" fill="#f08010" /><path d="M11.5 1 Q14 -1 16.5 1 L22 22 Q14 27 6 22 Z" fill="#f48a14" /><path d="M10.5 5 H17.5 L18.8 10 H9.2 Z M8 15.5 H20 L21.5 21.5 Q14 25 6.5 21.5 Z" fill="#dde2e6" /></svg>
        </TaskBtn>
        <TaskBtn w="ml-[4px] w-[58px]" className={on}>
          <svg className="h-8 w-8" viewBox="0 0 32 32"><circle cx="10" cy="9.5" r="9" fill="#0b88c8" /><circle cx="15.5" cy="15.5" r="13.5" fill="#0aa4e4" /><text x="9" y="23" fontFamily="Liberation Sans, sans-serif" fontWeight="bold" fontSize="20" fill="#fff">S</text><circle cx="24" cy="24.5" r="7.200" fill="#f44336" /><text x="21.3" y="28.5" fontFamily="Liberation Sans, sans-serif" fontSize="11" fill="#fff">1</text></svg>
        </TaskBtn>
        <div className="ml-auto flex items-center">
          <svg className="mt-[2px] h-[18px] w-[30px]" viewBox="0 0 30 18"><rect x=".5" y=".5" width="29" height="17" rx="1" fill="#fff" stroke="#1a1410" /><rect x="3" y="3" width="24" height="12" fill="#2a2018" /><path d="M4 4.5 H26 M4 8.5 H26" stroke="#fff" strokeWidth="3" strokeDasharray="3 1" /><path d="M4 12.5 H7 M8 12.5 H20 M21 12.5 H26" stroke="#fff" strokeWidth="3" /></svg>
          <svg className="ml-[13px] mt-[2px] h-[5px] w-2" viewBox="0 0 8 5"><path d="M0 4.5 L4 0 L8 4.5 Z" fill="#eee" /></svg>
          <svg className="ml-[13px] h-4 w-4" viewBox="0 0 16 16"><path d="M1.5 1 V15" stroke="#fff" strokeWidth="1.5" /><path d="M3 2 Q6 .5 9 3 L15 4 L12.5 9 Q9 9.5 8 8 Q5 7 3 9 Z" fill="#fff" /></svg>
          <svg className="ml-[8px] h-[13px] w-4" viewBox="0 0 16 13"><path d="M1.5 13 V10 M4.5 13 V8 M7.5 13 V5.5 M10.5 13 V3" stroke="#fff" strokeWidth="2" /><path d="M14 13 V.5" stroke="#9a928c" strokeWidth="2" /></svg>
          <svg className="ml-[9px] h-4 w-4" viewBox="0 0 16 16"><path d="M2 1 V4 M5 1 V4 M3.5 9 V15" stroke="#fff" strokeWidth="1.3" /><path d="M.5 4 H6.5 V7 L4.500 9.500 H2.500 L.5 7 Z" fill="#fff" /><path d="M8 3 H14 V15 H8 Z M9.5 1.500 H12.500" fill="none" stroke="#fff" strokeWidth="1.500" /></svg>
          <svg className="ml-[9px] h-4 w-[14px]" viewBox="0 0 14 16"><path d="M1 5 H3.500 L8 1 V15 L3.5 11 H1 Z" fill="#fff" /><path d="M10 5 Q12 8 10 11 M12 3.5 Q14.5 8 12 12.5" stroke="#ddd" fill="none" /></svg>
          <div className={`${UI} ml-[16px] mr-[13px] mt-[2px] w-[66px] whitespace-nowrap text-center text-[12px] leading-[17px] tracking-[-0.55px] text-white`}>17:10<br />09/02/2021</div>
        </div>
      </div>
    </div>
  );
}

export default function App() {
  return (
    <div className="flex h-[768px] w-[1366px] flex-col overflow-hidden bg-white">
      <TabStrip />
      <div className="h-[69px] border-b border-[#d5d6d8] bg-white"><AddressRow /><Bookmarks /></div>
      <AppHeader />
      <Toolbar />
      <div className="flex h-[522px]">
        <Sidebar />
        <div className="flex w-[13px] items-center justify-center gap-[2px] border-r border-[#dadce0] bg-[#fbfbfb]">
          <span className="h-[7px] w-px bg-[#444]" /><span className="h-[7px] w-px bg-[#444]" />
        </div>
        <Editor />
        <FormatPanel />
      </div>
      <Taskbar />
    </div>
  );
}
